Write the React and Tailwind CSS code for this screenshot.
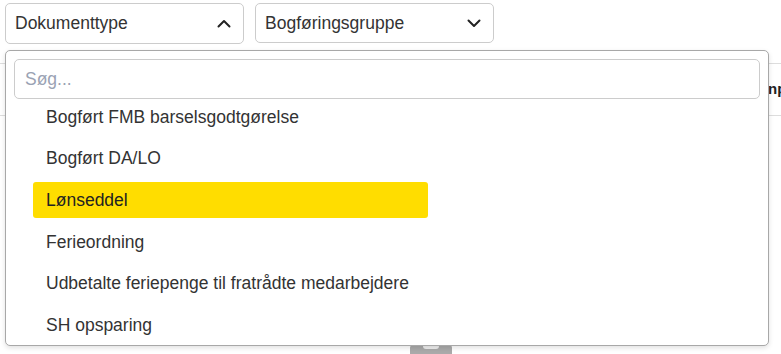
import React from "react";

const items = [
  "Bogført FMB barselsgodtgørelse",
  "Bogført DA/LO",
  "Lønseddel",
  "Ferieordning",
  "Udbetalte feriepenge til fratrådte medarbejdere",
  "SH opsparing",
];

function Chevron({ up }) {
  return (
    <svg width="14" height="9" viewBox="0 0 14 9" fill="none" stroke="#222" strokeWidth="2" strokeLinecap="round" strokeLinejoin="round">
      {up ? <polyline points="1.5,7.5 7,2 12.5,7.5" /> : <polyline points="1.5,1.5 7,7 12.5,1.5" />}
    </svg>
  );
}

export default function App() {
  return (
    <div className="relative w-[781px] h-[354px] overflow-hidden bg-white text-[#333] font-['Liberation_Sans',Arial,sans-serif]">
      {/* Background page */}
      <div className="flex gap-[11px] pl-[5px] pt-[3px]">
        <button className="flex items-center justify-between w-[239px] h-[41px] border border-[#ccc] rounded-[5px] pl-[9px] pr-[12px] text-[17.5px] text-[#333] bg-white">
          <span>Dokumenttype</span>
          <Chevron up />
        </button>
        <button className="flex items-center justify-between w-[239px] h-[40px] border border-[#ccc] rounded-[5px] pl-[9px] pr-[12px] text-[17.5px] text-[#333] bg-white">
          <span>Bogføringsgruppe</span>
          <Chevron />
        </button>
      </div>
      <div className="mt-[19px] h-[53px] border-y border-[#ddd] flex items-center">
        <div className="ml-[768px] font-bold text-[15px] text-[#222] whitespace-nowrap">np</div>
      </div>
      <div className="mt-[229px] ml-[410px] w-[42px] h-[12px] bg-[#aaa] rounded-t-[3px] flex justify-center">
        <div className="w-[16px] h-[4px] bg-[#eee] rounded-b-[3px]"></div>
      </div>

      {/* Dropdown overlay */}
      <div className="absolute left-[5px] top-[50px] w-[764px] h-[296px] bg-white border border-[#a8a8a8] rounded-[5px] shadow-[0_2px_5px_rgba(0,0,0,0.12)]">
        <div className="pt-[8px] px-[8px]">
          <div className="h-[40px] border border-[#ccc] rounded-[5px] flex items-center pl-[10px] text-[17.5px] text-[#9aa2b3]">
            Søg...
          </div>
        </div>
        <div className="flex flex-col gap-[5.6px] pl-[27px]">
          {items.map((it) => (
            <div
              key={it}
              className={
                "h-[36px] w-[395px] flex items-center px-[13px] text-[17.5px] rounded-[3px] whitespace-nowrap " +
                (it === "Lønseddel" ? "bg-[#ffdd00] text-[#222]" : "text-[#333]")
              }
            >
              {it}
            </div>
          ))}
        </div>
      </div>
    </div>
  );
}
